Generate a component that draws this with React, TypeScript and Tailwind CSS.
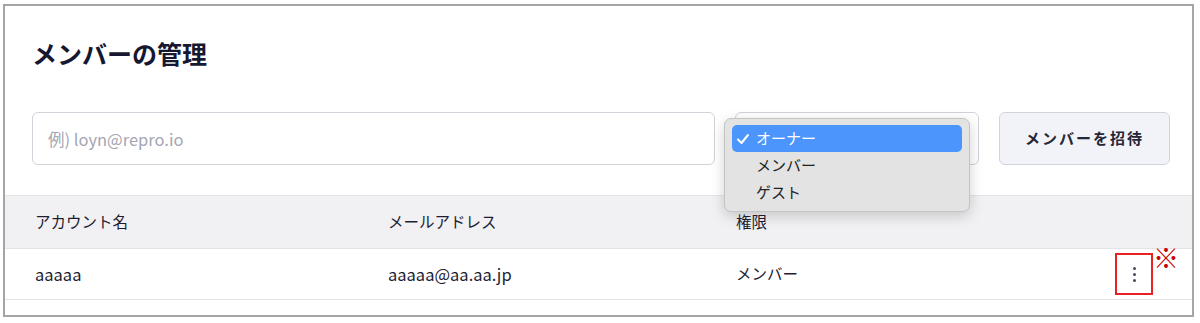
import React from 'react';

const font = { fontFamily: '"Noto Sans CJK JP", "Noto Sans", sans-serif' };

const roles = ['オーナー', 'メンバー', 'ゲスト'];

// ネイティブselectが開いた状態のメニュー
const RoleMenu = () => (
    <div className="absolute left-[-12px] top-[5px] w-[246px] h-[94px] rounded-[7px] border border-[#c4c4c4] bg-[#e3e3e3] shadow-[0_4px_14px_rgba(0,0,0,0.18)] px-[7px] pt-[6px]">
        {roles.map((r, i) => (
            <div
                key={r}
                className={
                    i === 0
                        ? 'flex items-center h-[27px] rounded-[5px] bg-[#4b95fd] text-white text-[15px] pl-[4px]'
                        : 'flex items-center h-[27px] text-[#222] text-[15px] pl-[24px]'
                }
            >
                {i === 0 && (
                    <svg width="14" height="14" viewBox="0 0 14 14" className="mr-[6px]">
                        <path d="M2 7.5 L5.5 11 L12 3" fill="none" stroke="white" strokeWidth="2" strokeLinecap="round" strokeLinejoin="round" />
                    </svg>
                )}
                {r}
            </div>
        ))}
    </div>
);

const App = () => {
    return (
        <div className="w-[1200px] h-[323px] bg-white pl-[3px] pt-[4px]" style={font}>
            <div className="w-[1191px] h-[313px] border-2 border-[#a5a5a5] flex flex-col">
                {/* Title */}
                <h1 className="px-[27px] pt-[31px] text-[25px] leading-[32px] font-bold text-[#161730]">
                    メンバーの管理
                </h1>

                {/* Invite row */}
                <div className="flex items-center gap-[20px] pl-[27px] pr-[22px] mt-[43px] h-[53px]">
                    <input
                        placeholder="例) loyn@repro.io"
                        className="shrink-0 w-[683px] h-[53px] rounded-[6px] border border-[#d2d3da] px-[15px] text-[16.5px] placeholder:text-[#a4a6b4] outline-none"
                    />
                    <div className="relative shrink-0 w-[244px] h-[53px] rounded-[6px] border border-[#d2d3da] bg-white">
                        <RoleMenu />
                    </div>
                    <button className="shrink-0 w-[171px] h-[53px] rounded-[6px] border border-[#d2d3da] bg-[#f2f3f9] text-[15px] font-bold text-[#252637] tracking-[2px]">
                        メンバーを招待
                    </button>
                </div>

                {/* Table */}
                <div className="mt-[30px] text-[15.5px] text-[#1d1e33]">
                    <div className="flex items-center h-[53px] bg-[#f1f1f4] border-t border-[#e3e3e8]">
                        <div className="w-[383px] pl-[30px]">アカウント名</div>
                        <div className="w-[348px]">メールアドレス</div>
                        <div className="flex-1">権限</div>
                    </div>
                    <div className="flex items-center h-[52px] border-y border-[#e3e3e8] text-[16.5px]">
                        <div className="w-[383px] pl-[30px]">aaaaa</div>
                        <div className="w-[348px]">aaaaa@aa.aa.jp</div>
                        <div className="flex-1 text-[15.5px]">メンバー</div>
                        <div className="relative mr-[39px]">
                            <button className="w-[38px] h-[42px] border-2 border-[#e82222] flex flex-col items-center justify-center gap-[3px]">
                                <span className="w-[3px] h-[3px] rounded-full bg-[#45475e]" />
                                <span className="w-[3px] h-[3px] rounded-full bg-[#45475e]" />
                                <span className="w-[3px] h-[3px] rounded-full bg-[#45475e]" />
                            </button>
                            <span className="absolute left-[38px] top-[-9px] text-[26px] leading-[26px] text-[#c80000] font-bold">
                                ※
                            </span>
                        </div>
                    </div>
                </div>
            </div>
        </div>
    );
};

export default App;
